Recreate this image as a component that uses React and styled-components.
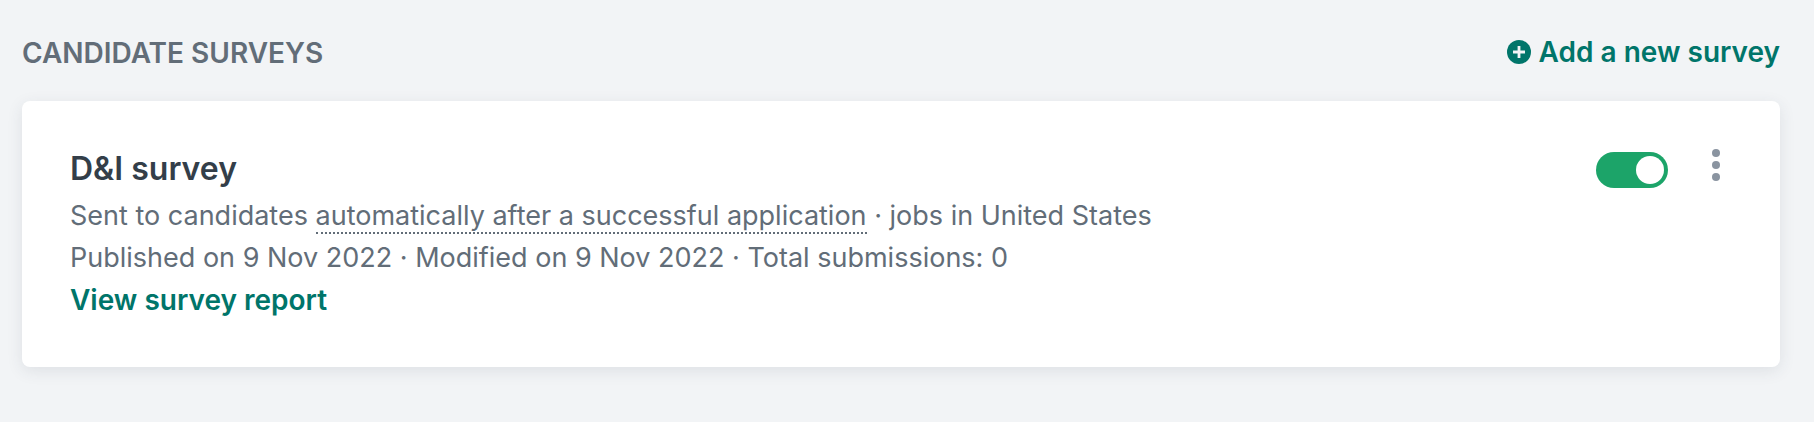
import React, { useState } from "react";
import styled, { createGlobalStyle } from "styled-components";

const GlobalStyle = createGlobalStyle`
  * { box-sizing: border-box; }
  body {
    margin: 0;
    background: #f2f4f6;
    color: #626d78;
    font-family: Inter, "Liberation Sans", sans-serif;
    font-size: 28px;
    line-height: 42px;
    -webkit-font-smoothing: antialiased;
  }
`;

const Page = styled.main`
  padding: 32px 34px 54px 22px;
`;

const Header = styled.header`
  display: flex;
  align-items: flex-start;
  justify-content: space-between;
  margin-bottom: 27px;
`;

const SectionTitle = styled.h2`
  margin: 0;
  font-size: 28px;
  font-weight: 600;
  text-transform: uppercase;
`;

const AddButton = styled.button`
  display: flex;
  align-items: center;
  gap: 8px;
  padding: 0;
  border: 0;
  background: none;
  color: #00756a;
  font: inherit;
  font-weight: 600;
  line-height: 40px;
  cursor: pointer;
`;

const Card = styled.article`
  display: flex;
  justify-content: space-between;
  padding: 48px 48px 46px;
  border-radius: 8px;
  background: #fff;
  box-shadow: 0 4px 16px rgba(48, 62, 77, 0.1);
`;

const Details = styled.div`
  display: flex;
  flex-direction: column;
  align-items: flex-start;
`;

const CardTitle = styled.h3`
  margin: 0 0 6px;
  color: #333e49;
  font-size: 32px;
  font-weight: 600;
  line-height: 40px;
`;

const Meta = styled.p`
  margin: 0;
  font-size: 27px;
  line-height: 42px;
`;

const Trigger = styled.span`
  border-bottom: 2px dotted currentColor;
`;

const ReportLink = styled.a`
  color: #00756a;
  font-weight: 600;
  text-decoration: none;
`;

const Actions = styled.div`
  display: flex;
  align-items: flex-start;
  gap: 32px;
`;

const Toggle = styled.input`
  appearance: none;
  display: flex;
  width: 72px;
  height: 36px;
  margin: 3px 0 0;
  padding: 4px;
  border-radius: 18px;
  background: #8a94a0;
  cursor: pointer;

  &::before {
    content: "";
    width: 28px;
    height: 28px;
    border-radius: 50%;
    background: #fff;
  }

  &:checked {
    justify-content: flex-end;
    background: #1ca469;
  }
`;

const MenuButton = styled.button`
  display: flex;
  justify-content: center;
  width: 32px;
  padding: 0;
  border: 0;
  background: none;
  color: #8a94a0;
  cursor: pointer;
`;

function PlusCircleIcon() {
  return (
    <svg width="24" height="24" viewBox="0 0 24 24" aria-hidden="true">
      <circle cx="12" cy="12" r="12" fill="currentColor" />
      <path d="M12 6v12M6 12h12" stroke="#f2f4f6" strokeWidth="2.8" />
    </svg>
  );
}

function DotsIcon() {
  return (
    <svg width="8" height="32" viewBox="0 0 8 32" fill="currentColor" aria-hidden="true">
      <circle cx="4" cy="4" r="4" />
      <circle cx="4" cy="16" r="4" />
      <circle cx="4" cy="28" r="4" />
    </svg>
  );
}

export default function App() {
  const [enabled, setEnabled] = useState(true);
  return (
    <>
      <GlobalStyle />
      <Page>
        <Header>
          <SectionTitle>Candidate surveys</SectionTitle>
          <AddButton type="button">
            <PlusCircleIcon />
            Add a new survey
          </AddButton>
        </Header>
        <Card>
          <Details>
            <CardTitle>D&amp;I survey</CardTitle>
            <Meta>
              Sent to candidates <Trigger>automatically after a successful application</Trigger> · jobs in United States
            </Meta>
            <Meta>Published on 9 Nov 2022 · Modified on 9 Nov 2022 · Total submissions: 0</Meta>
            <ReportLink href="#report">View survey report</ReportLink>
          </Details>
          <Actions>
            <Toggle
              type="checkbox"
              role="switch"
              aria-label="D&I survey enabled"
              checked={enabled}
              onChange={(event) => setEnabled(event.target.checked)}
            />
            <MenuButton type="button" aria-label="Survey options">
              <DotsIcon />
            </MenuButton>
          </Actions>
        </Card>
      </Page>
    </>
  );
}
